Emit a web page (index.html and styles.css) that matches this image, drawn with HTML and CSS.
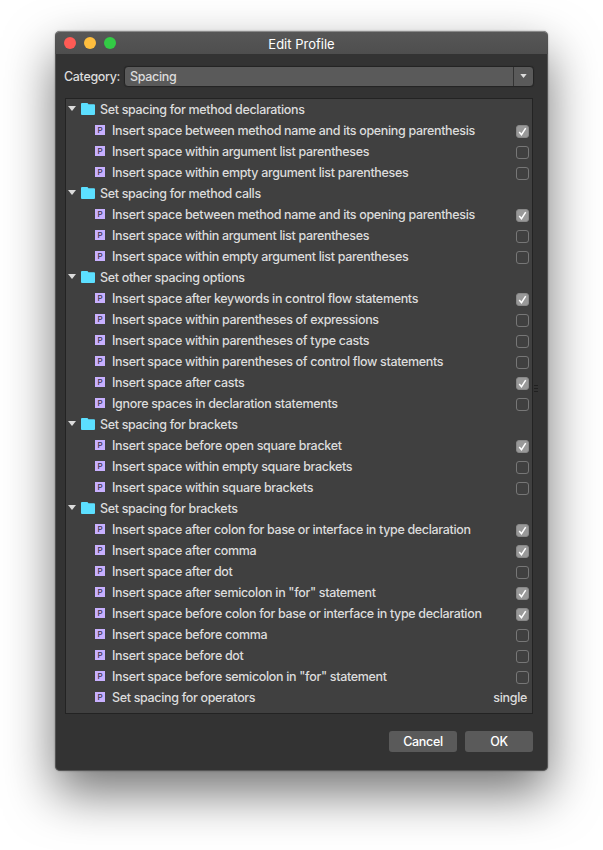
FILE: index.html
```html
<!DOCTYPE html>
<html lang="en">
<head>
<meta charset="utf-8">
<title>Edit Profile</title>
<link rel="stylesheet" href="styles.css">
</head>
<body>
<svg class="sprite" aria-hidden="true">
<symbol id="folder" viewBox="0 0 14 12"><path d="M0 1Q0 0 1 0H6Q7 0 7.4 1.2H13Q14 1.2 14 2.2V11Q14 12 13 12H1Q0 12 0 11Z" fill="#5cdfff"/></symbol>
<symbol id="arrow" viewBox="0 0 8 5"><path d="M0 0H8L4 5Z" fill="#dcdcdc"/></symbol>
<symbol id="tick" viewBox="0 0 13 13"><path d="M3.2 6.9L5.5 9.7L9.7 3.1" fill="none" stroke="#fff" stroke-width="1.5"/></symbol>
</svg>
<main class="window">
<header class="titlebar"><div class="lights"><i class="red"></i><i class="yellow"></i><i class="green"></i></div><h1>Edit Profile</h1></header>
<div class="category"><span class="caption">Category:</span><div class="select"><span>Spacing</span><b><svg><use href="#arrow"/></svg></b></div></div>
<div class="tree-area">
<div class="tree">
<div class="group"><svg class="arrow"><use href="#arrow"/></svg><svg class="folder"><use href="#folder"/></svg><span>Set spacing for method declarations</span></div>
<div class="row"><i>P</i><span>Insert space between method name and its opening parenthesis</span><b class="box on"><svg><use href="#tick"/></svg></b></div>
<div class="row"><i>P</i><span>Insert space within argument list parentheses</span><b class="box"></b></div>
<div class="row"><i>P</i><span>Insert space within empty argument list parentheses</span><b class="box"></b></div>
<div class="group"><svg class="arrow"><use href="#arrow"/></svg><svg class="folder"><use href="#folder"/></svg><span>Set spacing for method calls</span></div>
<div class="row"><i>P</i><span>Insert space between method name and its opening parenthesis</span><b class="box on"><svg><use href="#tick"/></svg></b></div>
<div class="row"><i>P</i><span>Insert space within argument list parentheses</span><b class="box"></b></div>
<div class="row"><i>P</i><span>Insert space within empty argument list parentheses</span><b class="box"></b></div>
<div class="group"><svg class="arrow"><use href="#arrow"/></svg><svg class="folder"><use href="#folder"/></svg><span>Set other spacing options</span></div>
<div class="row"><i>P</i><span>Insert space after keywords in control flow statements</span><b class="box on"><svg><use href="#tick"/></svg></b></div>
<div class="row"><i>P</i><span>Insert space within parentheses of expressions</span><b class="box"></b></div>
<div class="row"><i>P</i><span>Insert space within parentheses of type casts</span><b class="box"></b></div>
<div class="row"><i>P</i><span>Insert space within parentheses of control flow statements</span><b class="box"></b></div>
<div class="row"><i>P</i><span>Insert space after casts</span><b class="box on"><svg><use href="#tick"/></svg></b></div>
<div class="row"><i>P</i><span>Ignore spaces in declaration statements</span><b class="box"></b></div>
<div class="group"><svg class="arrow"><use href="#arrow"/></svg><svg class="folder"><use href="#folder"/></svg><span>Set spacing for brackets</span></div>
<div class="row"><i>P</i><span>Insert space before open square bracket</span><b class="box on"><svg><use href="#tick"/></svg></b></div>
<div class="row"><i>P</i><span>Insert space within empty square brackets</span><b class="box"></b></div>
<div class="row"><i>P</i><span>Insert space within square brackets</span><b class="box"></b></div>
<div class="group"><svg class="arrow"><use href="#arrow"/></svg><svg class="folder"><use href="#folder"/></svg><span>Set spacing for brackets</span></div>
<div class="row"><i>P</i><span>Insert space after colon for base or interface in type declaration</span><b class="box on"><svg><use href="#tick"/></svg></b></div>
<div class="row"><i>P</i><span>Insert space after comma</span><b class="box on"><svg><use href="#tick"/></svg></b></div>
<div class="row"><i>P</i><span>Insert space after dot</span><b class="box"></b></div>
<div class="row"><i>P</i><span>Insert space after semicolon in "for" statement</span><b class="box on"><svg><use href="#tick"/></svg></b></div>
<div class="row"><i>P</i><span>Insert space before colon for base or interface in type declaration</span><b class="box on"><svg><use href="#tick"/></svg></b></div>
<div class="row"><i>P</i><span>Insert space before comma</span><b class="box"></b></div>
<div class="row"><i>P</i><span>Insert space before dot</span><b class="box"></b></div>
<div class="row"><i>P</i><span>Insert space before semicolon in "for" statement</span><b class="box"></b></div>
<div class="row"><i>P</i><span>Set spacing for operators</span><em>single</em></div>
</div>
<div class="grip"><i></i><i></i><i></i></div>
</div>
<footer><button>Cancel</button><button>OK</button></footer>
</main>
</body>
</html>
```
FILE: styles.css
```css
* { box-sizing: border-box; }
body { margin: 0; height: 850px; padding: 31px 55px; overflow: hidden; background: #fff; font: 500 12.5px/21px Inter, "Liberation Sans", sans-serif; letter-spacing: -.33px; color: #dcdcdc; }
.sprite { position: absolute; width: 0; height: 0; }
svg { display: block; }
i, em { font-style: normal; }
.window { width: 493px; height: 740px; border-radius: 5px; background: #333; overflow: visible; box-shadow: inset 0 0 0 1px rgba(150,150,150,.35), 0 22px 50px rgba(0,0,0,.55), 0 0 2px rgba(0,0,0,.35); }
.titlebar { height: 23px; border-radius: 5px 5px 0 0; background: linear-gradient(#575757, #4e4e4e); border-top: 1px solid #8a8a8a; display: grid; grid-template-columns: 80px 1fr 80px; }
.lights { display: flex; gap: 8px; padding: 5px 0 0 9px; }
.lights i { width: 12px; height: 12px; border-radius: 50%; }
.red { background: #ff5b55; }
.yellow { background: #ffbe3e; }
.green { background: #33cb45; }
h1 { margin: 0; text-align: center; font-size: 13px; font-weight: 400; letter-spacing: 0; line-height: 24px; color: #fff; }
.category { height: 44px; display: flex; align-items: center; padding: 0 14px 0 9px; }
.caption { width: 60px; flex: none; white-space: nowrap; }
.select { flex: 1; height: 21px; display: flex; background: #5a5a5a; border: 1px solid #242424; border-radius: 4px; line-height: 19px; padding-left: 5px; box-shadow: 0 0 1px #222; }
.select span { flex: 1; }
.select b { width: 20px; border-left: 1px solid #333; display: flex; align-items: center; justify-content: center; }
.select svg { width: 7px; height: 4px; }
.tree-area { display: flex; align-items: center; margin-left: 10px; }
.tree { width: 468px; height: 616px; flex: none; background: #404040; border: 1px solid #232323; }
.group, .row { height: 21px; display: flex; align-items: center; white-space: nowrap; }
.group { padding-left: 2px; }
.arrow { width: 8px; height: 5px; margin: 0 5px 2px 0; }
.folder { width: 14px; height: 12px; margin: 0 5px 1px 0; }
.row { padding: 0 3px 0 29px; }
.row i { width: 10px; height: 10px; margin: 0 7px 1px 0; background: #c8b0ff; color: #383048; font-size: 8px; line-height: 10px; letter-spacing: 0; text-align: center; }
.row span { flex: 1; }
.row em { margin-right: 2px; }
.box { width: 13px; height: 13px; margin-top: 2px; border: 1px solid #777; border-radius: 3px; }
.on { background: #999; border-color: #888; }
.on svg { width: 13px; height: 13px; margin: -1px; }
.grip { margin: 0 0 35px 1px; display: grid; gap: 2px; }
.grip i { width: 4px; height: 1px; background: #202020; }
footer { display: flex; justify-content: flex-end; gap: 8px; padding: 17px 15px 0; }
button { width: 68px; height: 21px; padding: 0; border: 0; border-radius: 3px; background: #5a5a5a; color: #fff; font: inherit; letter-spacing: inherit; }
```
